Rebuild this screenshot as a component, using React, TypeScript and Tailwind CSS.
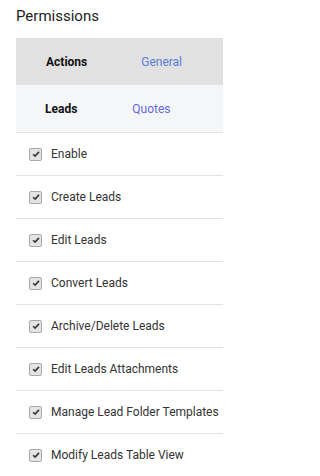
const items = [
  "Enable",
  "Create Leads",
  "Edit Leads",
  "Convert Leads",
  "Archive/Delete Leads",
  "Edit Leads Attachments",
  "Manage Lead Folder Templates",
  "Modify Leads Table View",
];

const CheckBox = () => (
  <span className="flex h-[13px] w-[13px] shrink-0 items-center justify-center rounded-[2px] border border-[#a9a9a9] bg-[#e4e4e4]">
    <svg viewBox="0 0 12 12" className="h-[10px] w-[10px]">
      <path d="M2.5 6.3 L4.9 8.6 L9.6 3.4" fill="none" stroke="#3a3a3a" strokeWidth="2" />
    </svg>
  </span>
);

export default function App() {
  return (
    <div className="h-[476px] w-[223px] overflow-hidden bg-white font-['Roboto',sans-serif]">
      <h2 className="pl-4 pt-[7px] text-[15px] leading-[19px] text-[#222]">Permissions</h2>

      <div className="ml-4 mt-[12px]">
        {/* Tabs */}
        <div className="flex h-[47px] items-center bg-[#e1e1e1] text-[12px]">
          <span className="ml-[30px] font-bold text-[#111]">Actions</span>
          <span className="ml-[54px] text-[#5a7dd8]">General</span>
        </div>
        <div className="flex h-[48px] items-center border-b border-[#e2e2e2] bg-[#f5f6f8] text-[12px]">
          <span className="ml-[29px] font-bold text-[#111]">Leads</span>
          <span className="ml-[55px] text-[#6668dc]">Quotes</span>
        </div>

        {/* Permission list */}
        {items.map((label) => (
          <div
            key={label}
            className="flex h-[43px] items-center gap-[9px] border-b border-[#e2e2e2] pl-[13px] text-[12px] text-[#333]"
          >
            <CheckBox />
            <span className="whitespace-nowrap">{label}</span>
          </div>
        ))}
      </div>
    </div>
  );
}
